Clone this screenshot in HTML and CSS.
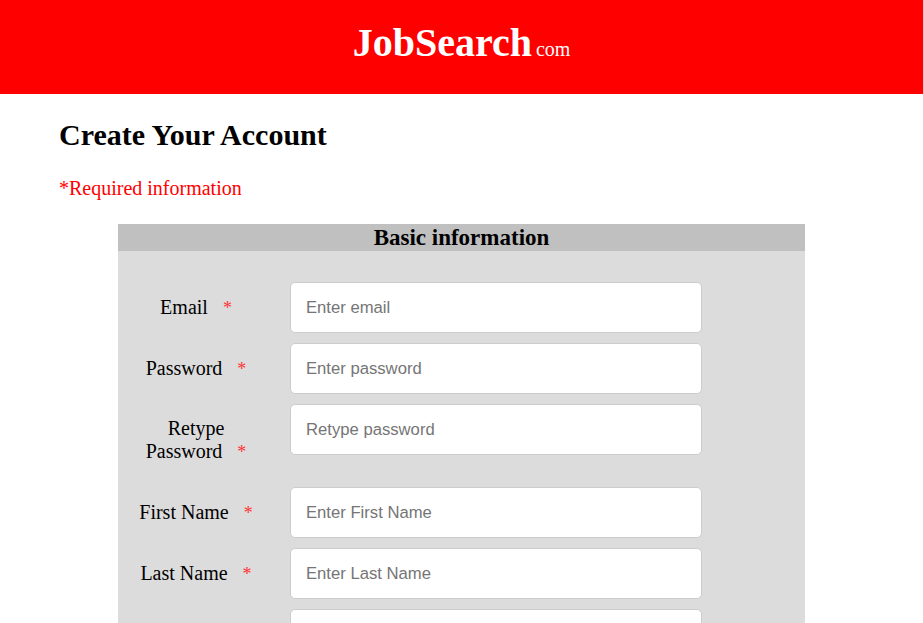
FILE: index.html
```html
<!DOCTYPE html>
<html>
<head>
<meta charset="utf-8">
<title>JobSearch</title>
<link rel="stylesheet" href="styles.css">
</head>
<body>
<header class="site-header">
  <div class="brand"><span class="brand-main">JobSearch</span> <span class="brand-sub">com</span></div>
</header>
<main class="content">
  <h1 class="title">Create Your Account</h1>
  <p class="required-note">*Required information</p>
  <section class="panel">
    <div class="panel-head">Basic information</div>
    <form class="panel-body">
      <label class="lbl">Email&nbsp;&nbsp;&nbsp;<span class="req">*</span></label>
      <input class="field" type="email" placeholder="Enter email">
      <label class="lbl">Password&nbsp;&nbsp;&nbsp;<span class="req">*</span></label>
      <input class="field" type="password" placeholder="Enter password">
      <label class="lbl">Retype Password&nbsp;&nbsp;&nbsp;<span class="req">*</span></label>
      <input class="field field-top" type="password" placeholder="Retype password">
      <label class="lbl">First Name&nbsp;&nbsp;&nbsp;<span class="req">*</span></label>
      <input class="field" type="text" placeholder="Enter First Name">
      <label class="lbl">Last Name&nbsp;&nbsp;&nbsp;<span class="req">*</span></label>
      <input class="field" type="text" placeholder="Enter Last Name">
      <label class="lbl"></label>
      <input class="field" type="text" placeholder="">
    </form>
  </section>
</main>
</body>
</html>
```

FILE: styles.css
```css
html, body {
  margin: 0;
  padding: 0;
  background: #ffffff;
  font-family: "Liberation Serif", "Times New Roman", serif;
  color: #000;
}

.site-header {
  background: #ff0000;
  height: 94px;
  box-sizing: border-box;
  padding-top: 20px;
  text-align: center;
  color: #fff;
}

.brand {
  line-height: 46px;
}

.brand-main {
  font-size: 40px;
  font-weight: bold;
}

.brand-sub {
  font-size: 20px;
}

.content {
  padding: 0 0 0 59px;
}

.title {
  margin: 24px 0 0 0;
  font-size: 30px;
  font-weight: bold;
  line-height: 34px;
}

.required-note {
  margin: 25px 0 0 0;
  font-size: 20px;
  line-height: 23px;
  color: #ff0000;
}

.panel {
  margin: 24px 0 0 59px;
  width: 687px;
  background: #dcdcdc;
}

.panel-head {
  background: #c0c0c0;
  text-align: center;
  font-size: 23px;
  font-weight: bold;
  line-height: 27px;
  height: 27px;
}

.panel-body {
  display: grid;
  grid-template-columns: 156px 412px;
  column-gap: 16px;
  row-gap: 10px;
  padding: 31px 0 40px 0;
  margin: 0;
}

.lbl {
  font-size: 20px;
  line-height: 23px;
  text-align: center;
  align-self: center;
  padding: 13px 0;
}

.req {
  color: #ff3333;
  font-size: 18px;
}

.field {
  box-sizing: border-box;
  width: 412px;
  height: 51px;
  border: 1px solid #cccccc;
  border-radius: 5px;
  background: #fff;
  padding: 0 15px;
  font-family: "Liberation Sans", Arial, sans-serif;
  font-size: 16.67px;
  color: #333;
  outline: none;
  margin: 0;
}

.field-top {
  align-self: start;
}

.field::placeholder {
  color: #757575;
  opacity: 1;
}
```
